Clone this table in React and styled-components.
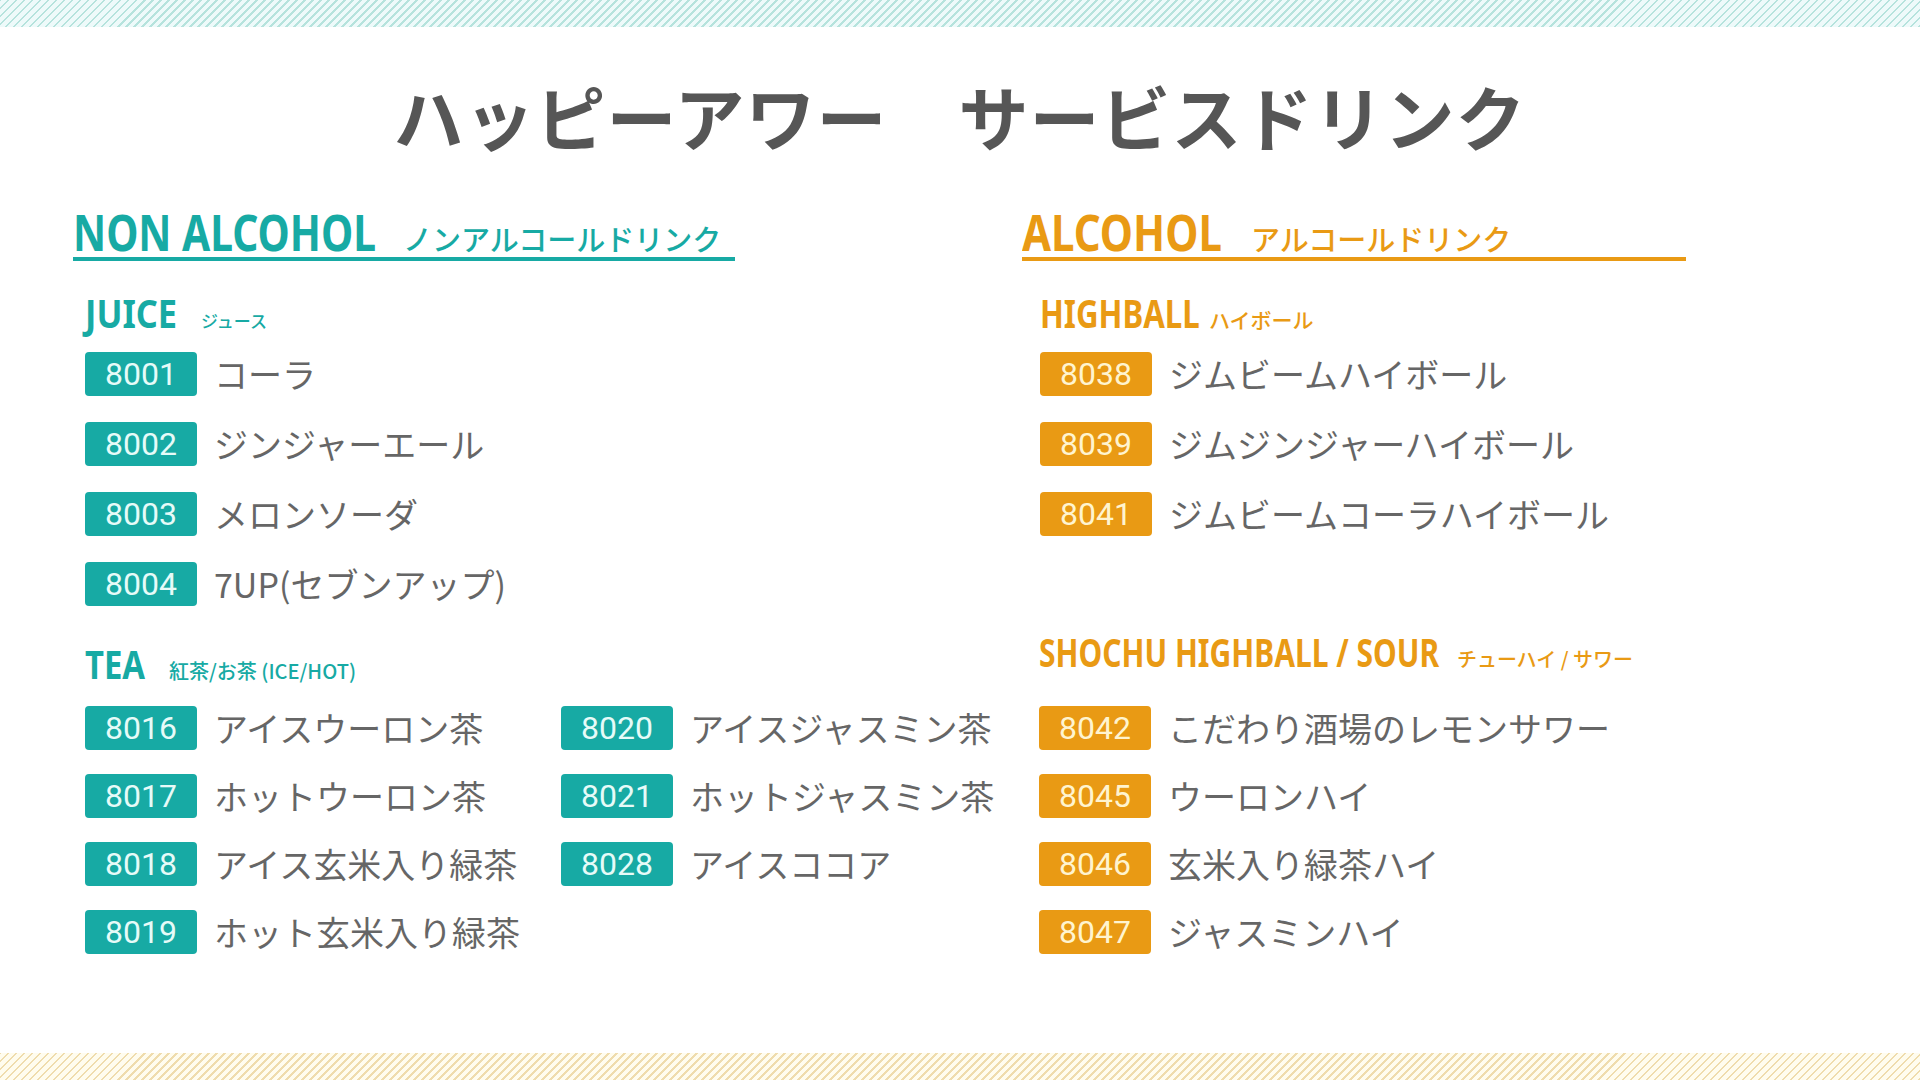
import React from 'react';
import styled, { createGlobalStyle } from 'styled-components';

const TEAL = '#17aaa4';
const ORANGE = '#e99a14';

const Global = createGlobalStyle`
  html, body { margin: 0; padding: 0; background: #fff; }
  body { font-family: "Noto Sans CJK JP", sans-serif; }
`;

const Page = styled.div`
  width: 1920px;
  height: 1080px;
  display: flex;
  flex-direction: column;
  overflow: hidden;
  background: #fff;
`;

const Stripe = styled.div`
  flex: none;
  height: ${p => p.$h}px;
  background-color: ${p => p.$bg};
  background-image: repeating-linear-gradient(-45deg, ${p => p.$line} 0 2px, transparent 2px 5.66px);
`;

const Title = styled.h1`
  margin: 0;
  padding-top: 54px;
  text-align: center;
  font: 700 70px/1 "Noto Sans CJK JP", sans-serif;
  color: #565656;
  letter-spacing: 1px;
`;

const Main = styled.main`
  flex: 1;
  display: grid;
  grid-template-columns: 662px 664px;
  column-gap: 287px;
  align-content: start;
  padding-left: 73px;
`;

const SectionHead = styled.div`
  display: flex;
  align-items: baseline;
  gap: 30px;
  margin-top: 56px;
  white-space: nowrap;
  border-bottom: 4px solid ${p => p.$c};
  color: ${p => p.$c};
`;

/* condensed display lettering: the box keeps the target width, the glyphs are narrowed to fit */
const DisplayBox = styled.span`
  flex: none;
  display: inline-block;
  width: ${p => p.$w}px;
  font-family: "Noto Sans", "Open Sans", sans-serif;
  font-weight: 700;
  font-size: ${p => p.$size}px;
  line-height: 1;
  white-space: nowrap;
`;

const DisplayText = styled.span`
  display: inline-block;
  transform: scaleX(${p => p.$s});
  transform-origin: 0 50%;
`;

function Display({ size, w, s, children }) {
  return (
    <DisplayBox $size={size} $w={w}>
      <DisplayText $s={s}>{children}</DisplayText>
    </DisplayBox>
  );
}

const SectionSub = styled.span`
  flex: none;
  font: 500 29px/1 "Noto Sans CJK JP", sans-serif;
`;

const Block = styled.section`
  display: flex;
  flex-direction: column;
  padding-top: ${p => p.$top}px;
  padding-left: ${p => p.$inset}px;
`;

const SubHead = styled.div`
  display: flex;
  align-items: baseline;
  gap: ${p => p.$gap}px;
  white-space: nowrap;
  color: ${p => p.$c};
`;

const SubNote = styled.span`
  flex: none;
  font: 500 ${p => p.$size}px/1 "Noto Sans CJK JP", sans-serif;
`;

const List = styled.div`
  display: grid;
  grid-template-columns: ${p => p.$cols};
  row-gap: ${p => p.$gap}px;
  margin-top: ${p => p.$mt}px;
`;

const Item = styled.div`
  display: flex;
  align-items: center;
  gap: 17px;
`;

const Badge = styled.span`
  flex: none;
  width: 112px;
  height: 44px;
  border-radius: 4px;
  background: ${p => p.$c};
  color: ${p => p.$fg};
  display: flex;
  align-items: center;
  justify-content: center;
  font: 400 32px/1 Roboto, "Liberation Sans", sans-serif;
`;

const Name = styled.span`
  font: 400 34px/1 "Noto Sans CJK JP", sans-serif;
  color: #666;
  white-space: nowrap;
`;

const teal = { c: TEAL, fg: '#e6fbf8' };
const orange = { c: ORANGE, fg: '#fff4cf' };

const juice = [
  ['8001', 'コーラ'],
  ['8002', 'ジンジャーエール'],
  ['8003', 'メロンソーダ'],
  ['8004', '7UP(セブンアップ)'],
];

const tea = [
  ['8016', 'アイスウーロン茶'],
  ['8020', 'アイスジャスミン茶'],
  ['8017', 'ホットウーロン茶'],
  ['8021', 'ホットジャスミン茶'],
  ['8018', 'アイス玄米入り緑茶'],
  ['8028', 'アイスココア'],
  ['8019', 'ホット玄米入り緑茶'],
];

const highball = [
  ['8038', 'ジムビームハイボール'],
  ['8039', 'ジムジンジャーハイボール'],
  ['8041', 'ジムビームコーラハイボール'],
];

const sour = [
  ['8042', 'こだわり酒場のレモンサワー'],
  ['8045', 'ウーロンハイ'],
  ['8046', '玄米入り緑茶ハイ'],
  ['8047', 'ジャスミンハイ'],
];

function Items({ data, theme, cols = '1fr', gap, mt }) {
  return (
    <List $cols={cols} $gap={gap} $mt={mt}>
      {data.map(([code, name]) => (
        <Item key={code}>
          <Badge $c={theme.c} $fg={theme.fg}>{code}</Badge>
          <Name>{name}</Name>
        </Item>
      ))}
    </List>
  );
}

export default function App() {
  return (
    <Page>
      <Global />
      <Stripe $h={27} $bg="#eefafa" $line="#b6e3dd" />
      <Title>ハッピーアワー　サービスドリンク</Title>
      <Main>
        <SectionHead $c={TEAL}>
          <Display size={50} w={300} s={0.815}>NON ALCOHOL</Display>
          <SectionSub>ノンアルコールドリンク</SectionSub>
        </SectionHead>
        <SectionHead $c={ORANGE}>
          <Display size={50} w={199} s={0.84}>ALCOHOL</Display>
          <SectionSub>アルコールドリンク</SectionSub>
        </SectionHead>

        <Block $top={32} $inset={12}>
          <SubHead $c={TEAL} $gap={24}>
            <Display size={40} w={92} s={0.86}>JUICE</Display>
            <SubNote $size={17}>ジュース</SubNote>
          </SubHead>
          <Items data={juice} theme={teal} gap={26} mt={18.5} />
        </Block>
        <Block $top={32} $inset={18}>
          <SubHead $c={ORANGE} $gap={11}>
            <Display size={40} w={158} s={0.78}>HIGHBALL</Display>
            <SubNote $size={21}>ハイボール</SubNote>
          </SubHead>
          <Items data={highball} theme={orange} gap={26} mt={18.5} />
        </Block>

        <Block $top={38} $inset={12}>
          <SubHead $c={TEAL} $gap={22}>
            <Display size={40} w={62} s={0.82}>TEA</Display>
            <SubNote $size={20}>紅茶/お茶 (ICE/HOT)</SubNote>
          </SubHead>
          <Items data={tea} theme={teal} cols="476px auto" gap={24} mt={22} />
        </Block>
        <Block $top={26} $inset={17}>
          <SubHead $c={ORANGE} $gap={14}>
            <Display size={40} w={404} s={0.75}>SHOCHU HIGHBALL / SOUR</Display>
            <SubNote $size={20}>チューハイ / サワー</SubNote>
          </SubHead>
          <Items data={sour} theme={orange} gap={24} mt={34} />
        </Block>
      </Main>
      <Stripe $h={27} $bg="#fffcee" $line="#efdcad" />
    </Page>
  );
}
